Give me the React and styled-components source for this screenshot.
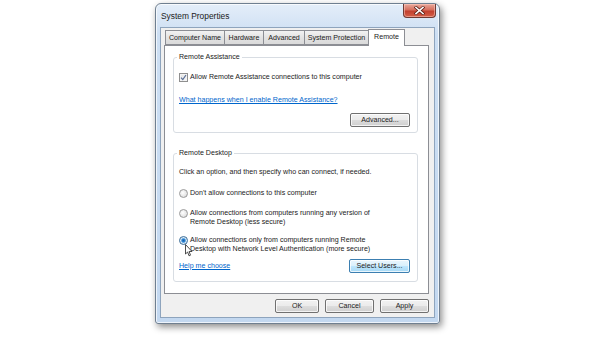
import React from "react";
import styled, { createGlobalStyle } from "styled-components";

const Global = createGlobalStyle`
  html, body { margin: 0; padding: 0; background: #ffffff; }
  body { font-family: "Liberation Sans", Arial, sans-serif; }
  * { box-sizing: border-box; }
`;

const Desktop = styled.div`
  width: 600px;
  height: 337px;
  padding: 3px 0 0 155px;
  background: #ffffff;
  position: relative;
  overflow: hidden;
`;

const Win = styled.div`
  width: 285px;
  height: 321px;
  display: flex;
  flex-direction: column;
  border: 1px solid #6f7f90;
  border-radius: 6px 6px 3px 3px;
  background: linear-gradient(to bottom, #e4eef9 0px, #cddff3 30px, #c3d8f0 100%);
  box-shadow: 2px 3px 7px rgba(0, 0, 0, 0.45), inset 0 0 0 1px rgba(255, 255, 255, 0.7);
  padding: 0 4px 5px 4px;
`;

const TitleBar = styled.div`
  height: 23px;
  display: flex;
  align-items: flex-start;
  justify-content: space-between;
`;

const Title = styled.div`
  font-size: 8.4px;
  color: #1b1b1b;
  padding: 7px 0 0 1px;
`;

const Close = styled.div`
  width: 33px;
  height: 14px;
  margin-right: -1px;
  border: 1px solid #6e3a34;
  border-top: none;
  border-radius: 0 0 4px 4px;
  background: linear-gradient(to bottom, #e9a99c 0%, #d66f5e 45%, #c2402f 55%, #d45e46 100%);
  box-shadow: inset 0 0 0 1px rgba(255, 210, 200, 0.5);
  display: flex;
  align-items: center;
  justify-content: center;
`;

const Client = styled.div`
  flex: 1;
  background: #f0f0f0;
  border: 1px solid #8ea4bd;
  display: flex;
  flex-direction: column;
  padding: 2px 5px 0 3px;
`;

const Tabs = styled.div`
  display: flex;
  align-items: flex-end;
  height: 15px;
  padding-left: 1px;
  position: relative;
  z-index: 1;
`;

const Tab = styled.div`
  width: ${(p) => p.$w}px;
  height: ${(p) => (p.$active ? "17px" : "15px")};
  padding-top: ${(p) => (p.$active ? "2px" : "1px")};
  font-size: 7.1px;
  color: #1b1b1b;
  border: 1px solid #8c8e94;
  border-bottom: ${(p) => (p.$active ? "none" : "1px solid #8c8e94")};
  margin-left: ${(p) => (p.$first ? "0" : "-1px")};
  margin-bottom: ${(p) => (p.$active ? "-1px" : "0")};
  background: ${(p) =>
    p.$active ? "#ffffff" : "linear-gradient(to bottom, #f2f2f2, #e3e3e3 50%, #dadada)"};
  white-space: nowrap;
  display: flex;
  justify-content: center;
  align-items: ${(p) => (p.$active ? "flex-start" : "center")};
  line-height: 10px;
`;

const Panel = styled.div`
  height: 249px;
  background: #ffffff;
  border: 1px solid #8c8e94;
  padding: 11px 10px 0 8px;
  display: flex;
  flex-direction: column;
`;

const Group = styled.div`
  position: relative;
  border: 1px solid #d8dde3;
  border-radius: 3px;
  height: ${(p) => p.$h}px;
  margin-top: ${(p) => p.$mt || 0}px;
  padding: 0 7px 0 5px;
  display: flex;
  flex-direction: column;
`;

const Legend = styled.span`
  position: absolute;
  top: -5px;
  left: 3px;
  padding: 0 2px;
  background: #ffffff;
  font-size: 7.1px;
  line-height: 9px;
  color: #1b1b1b;
`;

const Text = styled.div`
  font-size: 7.1px;
  line-height: 9px;
  color: #1b1b1b;
  margin-top: ${(p) => p.$mt || 0}px;
`;

const Row = styled.div`
  display: flex;
  align-items: flex-start;
  gap: 2px;
  margin-top: ${(p) => p.$mt || 0}px;
  font-size: 7.1px;
  line-height: 9px;
  color: #1b1b1b;
`;

const Box = styled.span`
  width: 9px;
  height: 9px;
  flex: none;
  border: 1px solid #8f8f8f;
  background: linear-gradient(135deg, #e2e2e2, #f8f8f8);
  display: flex;
  align-items: center;
  justify-content: center;
  box-shadow: inset 0 0 0 1px #f4f4f4;
`;

const Radio = styled.span`
  width: 9px;
  height: 9px;
  flex: none;
  border-radius: 50%;
  border: 1px solid ${(p) => (p.$on ? "#3a6c98" : "#9a9a9a")};
  background: ${(p) =>
    p.$on
      ? "radial-gradient(circle at 50% 50%, #1a5fa6 0, #2b86d6 1.6px, #d7e9f7 2.8px, #f2f2f2 100%)"
      : "radial-gradient(circle at 40% 40%, #ffffff 0, #e6e6e6 60%, #cfcfcf 100%)"};
`;

const Link = styled.a`
  font-size: 7.1px;
  line-height: 9px;
  color: #0066cc;
  text-decoration: underline;
  margin-top: ${(p) => p.$mt || 0}px;
  align-self: ${(p) => p.$self || "auto"};
`;

const Btn = styled.div`
  width: ${(p) => p.$w}px;
  height: 14px;
  border: 1px solid ${(p) => (p.$focus ? "#3c7fb1" : "#707070")};
  border-radius: 2px;
  background: ${(p) =>
    p.$focus
      ? "linear-gradient(to bottom, #eaf6fd 0%, #d9f0fc 50%, #bee6fd 51%, #a7d9f5 100%)"
      : "linear-gradient(to bottom, #f2f2f2 0%, #ebebeb 50%, #dddddd 51%, #cfcfcf 100%)"};
  box-shadow: inset 0 0 0 1px rgba(255, 255, 255, 0.75);
  font-size: 7.1px;
  color: #1b1b1b;
  display: flex;
  align-items: center;
  justify-content: center;
  flex: none;
`;

const BtnRow = styled.div`
  display: flex;
  justify-content: ${(p) => p.$justify || "flex-end"};
  align-items: center;
  gap: ${(p) => p.$gap || 0}px;
  margin-top: ${(p) => p.$mt || 0}px;
`;

const Footer = styled.div`
  display: flex;
  justify-content: flex-end;
  gap: 6px;
  padding: 5px 0 0 0;
`;

const Cursor = styled.svg`
  position: absolute;
  left: 185px;
  top: 244px;
`;

export default function App() {
  return (
    <>
      <Global />
      <Desktop>
        <Win>
          <TitleBar>
            <Title>System Properties</Title>
            <Close>
              <svg width="11" height="9" viewBox="0 0 11 9">
                <path d="M2 1.5 L9 7.5 M9 1.5 L2 7.5" stroke="#5a1f18" strokeWidth="3" strokeLinecap="square" />
                <path d="M2 1.5 L9 7.5 M9 1.5 L2 7.5" stroke="#ffffff" strokeWidth="1.6" strokeLinecap="square" />
              </svg>
            </Close>
          </TitleBar>
          <Client>
            <Tabs>
              <Tab $first $w={60}>Computer Name</Tab>
              <Tab $w={40}>Hardware</Tab>
              <Tab $w={42}>Advanced</Tab>
              <Tab $w={65}>System Protection</Tab>
              <Tab $active $w={37}>Remote</Tab>
            </Tabs>
            <Panel>
              <Group $h={76}>
                <Legend>Remote Assistance</Legend>
                <Row $mt={15}>
                  <Box>
                    <svg width="7" height="7" viewBox="0 0 7 7">
                      <path d="M1 3.6 L2.8 5.6 L6 1" fill="none" stroke="#5a6f96" strokeWidth="1.2" />
                    </svg>
                  </Box>
                  <span>Allow Remote Assistance connections to this computer</span>
                </Row>
                <Link $mt={14} $self="flex-start">What happens when I enable Remote Assistance?</Link>
                <BtnRow $mt={8}>
                  <Btn $w={60}>Advanced...</Btn>
                </BtnRow>
              </Group>
              <Group $h={129} $mt={20}>
                <Legend>Remote Desktop</Legend>
                <Text $mt={14}>Click an option, and then specify who can connect, if needed.</Text>
                <Row $mt={12}>
                  <Radio />
                  <span>Don't allow connections to this computer</span>
                </Row>
                <Row $mt={11}>
                  <Radio />
                  <span>
                    Allow connections from computers running any version of
                    <br />
                    Remote Desktop (less secure)
                  </span>
                </Row>
                <Row $mt={9}>
                  <Radio $on />
                  <span>
                    Allow connections only from computers running Remote
                    <br />
                    Desktop with Network Level Authentication (more secure)
                  </span>
                </Row>
                <BtnRow $justify="space-between" $mt={5}>
                  <Link>Help me choose</Link>
                  <Btn $w={61} $focus>Select Users...</Btn>
                </BtnRow>
              </Group>
            </Panel>
            <Footer>
              <Btn $w={44}>OK</Btn>
              <Btn $w={49}>Cancel</Btn>
              <Btn $w={49}>Apply</Btn>
            </Footer>
          </Client>
        </Win>
        <Cursor width="8" height="13" viewBox="0 0 8 13">
          <path d="M0.5 0.5 L0.5 10 L2.6 8 L4 11.8 L5.5 11.2 L4.1 7.5 L7 7.5 Z" fill="#ffffff" stroke="#222222" strokeWidth="0.8" />
        </Cursor>
      </Desktop>
    </>
  );
}
